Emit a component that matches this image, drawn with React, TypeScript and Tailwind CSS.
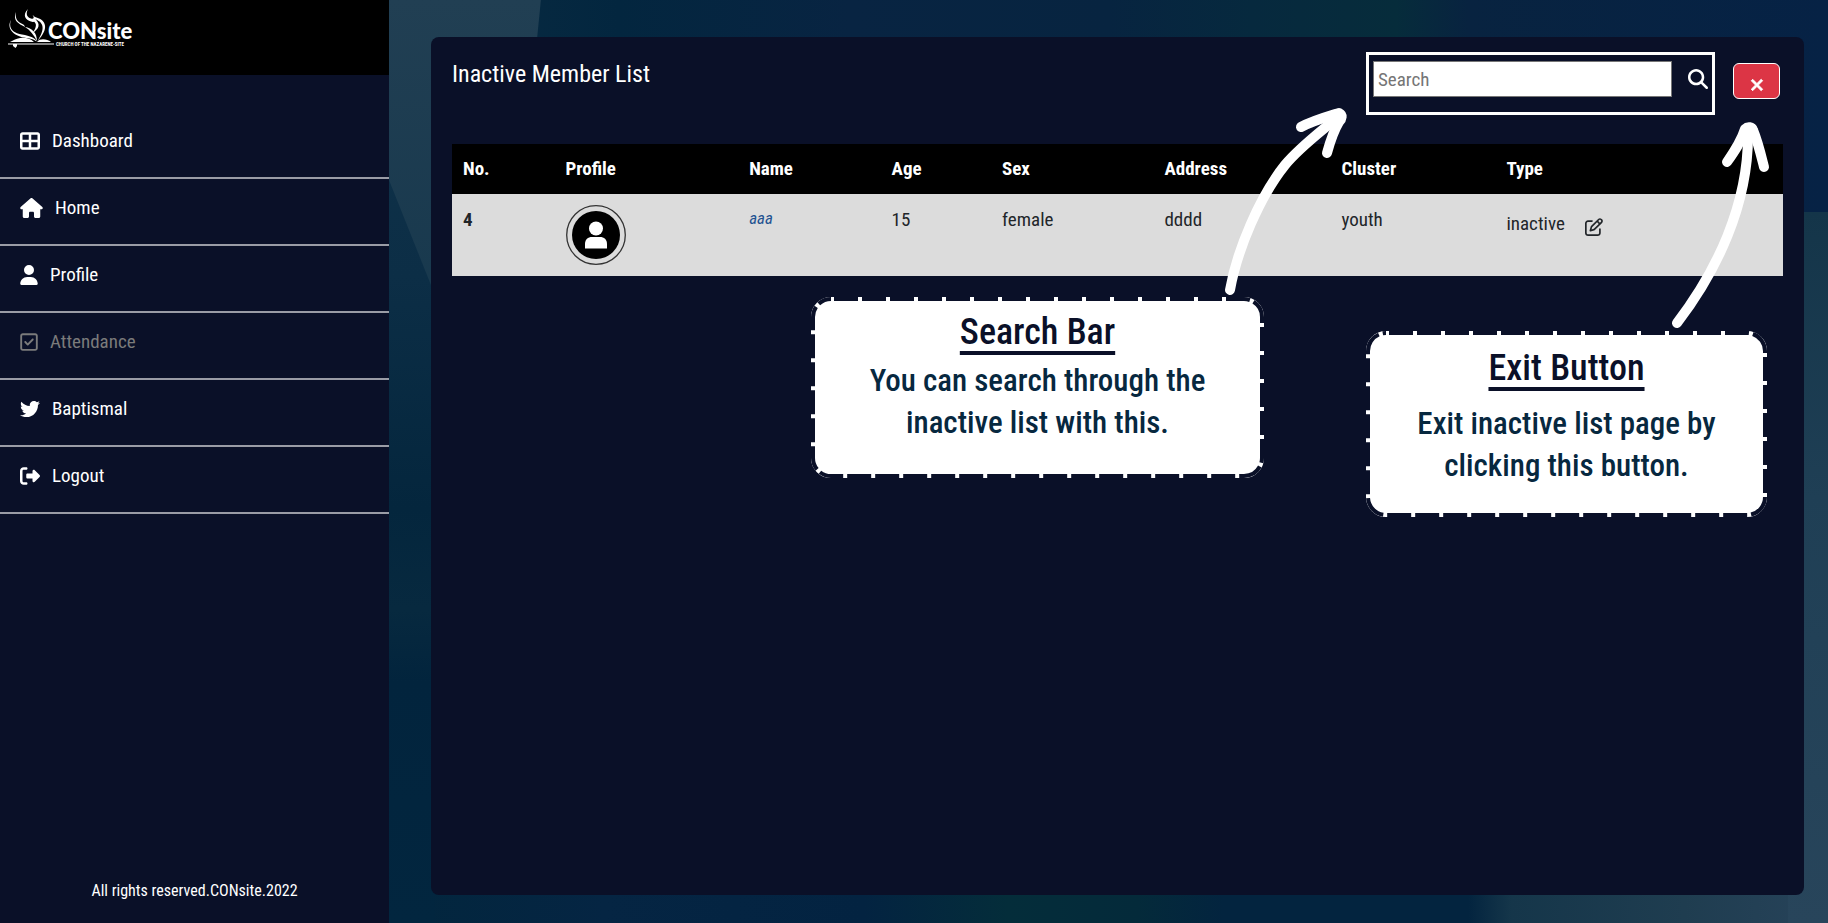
import type { ReactNode } from "react";
import { BiX } from "react-icons/bi";
import {
  FaHouse,
  FaMagnifyingGlass,
  FaRegPenToSquare,
  FaRegSquareCheck,
  FaRightFromBracket,
  FaTableCellsLarge,
  FaTwitter,
  FaUser,
} from "react-icons/fa6";

const navItems = [
  { label: "Dashboard", icon: <FaTableCellsLarge className="h-5 w-5" />, muted: false },
  { label: "Home", icon: <FaHouse className="h-5 w-[23px]" />, muted: false },
  { label: "Profile", icon: <FaUser className="h-5 w-[18px]" />, muted: false },
  { label: "Attendance", icon: <FaRegSquareCheck className="h-5 w-[18px]" />, muted: true },
  { label: "Baptismal", icon: <FaTwitter className="h-5 w-5" />, muted: false },
  { label: "Logout", icon: <FaRightFromBracket className="h-5 w-5" />, muted: false },
];

const columns = [
  { label: "No.", width: "w-[7.7%]" },
  { label: "Profile", width: "w-[13.8%]" },
  { label: "Name", width: "w-[10.7%]" },
  { label: "Age", width: "w-[8.3%]" },
  { label: "Sex", width: "w-[12.2%]" },
  { label: "Address", width: "w-[13.3%]" },
  { label: "Cluster", width: "w-[12.4%]" },
  { label: "Type", width: "" },
];

function Backdrop() {
  return (
    <svg
      className="absolute inset-0 h-full w-full"
      viewBox="0 0 1440 923"
      preserveAspectRatio="none"
      aria-hidden="true"
    >
      <defs>
        <linearGradient id="top" x1="0" x2="1" y1="0" y2="0">
          <stop offset="0" stopColor="#0a2c42" />
          <stop offset="0.16" stopColor="#03263f" />
          <stop offset="0.32" stopColor="#082442" />
          <stop offset="0.5" stopColor="#072440" />
          <stop offset="0.6" stopColor="#06293e" />
          <stop offset="0.7" stopColor="#062c3b" />
          <stop offset="0.75" stopColor="#082340" />
          <stop offset="1" stopColor="#062245" />
        </linearGradient>
        <linearGradient id="bottom" x1="0" x2="1" y1="0" y2="0">
          <stop offset="0" stopColor="#02263d" />
          <stop offset="0.15" stopColor="#052543" />
          <stop offset="0.33" stopColor="#032341" />
          <stop offset="0.43" stopColor="#042d3a" />
          <stop offset="0.52" stopColor="#042a3a" />
          <stop offset="0.58" stopColor="#03243f" />
          <stop offset="0.75" stopColor="#03243f" />
          <stop offset="0.78" stopColor="#15364a" />
          <stop offset="0.9" stopColor="#1f3d50" />
          <stop offset="1" stopColor="#27435a" />
        </linearGradient>
        <linearGradient id="leftEdge" x1="0" x2="0" y1="0" y2="1">
          <stop offset="0" stopColor="#10334a" />
          <stop offset="0.3" stopColor="#0c2e46" />
          <stop offset="0.55" stopColor="#04263d" />
          <stop offset="0.66" stopColor="#07293f" />
          <stop offset="0.74" stopColor="#02243d" />
          <stop offset="1" stopColor="#02263f" />
        </linearGradient>
        <linearGradient id="leftLight" x1="0" x2="0" y1="0" y2="1">
          <stop offset="0" stopColor="#213f53" />
          <stop offset="1" stopColor="#17384d" />
        </linearGradient>
        <linearGradient id="rightEdge" x1="0" x2="0" y1="0" y2="1">
          <stop offset="0" stopColor="#143549" />
          <stop offset="0.4" stopColor="#1f3f55" />
          <stop offset="1" stopColor="#28455b" />
        </linearGradient>
      </defs>
      <rect width="1440" height="480" fill="url(#top)" />
      <rect y="480" width="1440" height="443" fill="url(#bottom)" />
      <rect width="46" height="923" fill="url(#leftEdge)" />
      <path d="M0 0H152L146 60L60 330L0 180Z" fill="url(#leftLight)" />
      <rect x="1400" y="212" width="40" height="711" fill="url(#rightEdge)" />
    </svg>
  );
}

function Logo() {
  return (
    <a href="#home" aria-label="CONsite home" className="flex items-start text-white">
      <svg viewBox="0 0 46 40" className="h-10 w-[46px] shrink-0" fill="currentColor" aria-hidden="true">
        <path d="M3 12C0 20 5 25 14 26.500C22 28 28 30 28.500 33.500C24 29.500 17 30.500 12 28.500C3 25.500 -1 19 3 12Z" />
        <path d="M8 4C7 10 9 13 12.500 15C15.500 16.500 16.500 17 17 19C13 16.500 4 14 8 4Z" />
        <path d="M20 1C17.500 6 19 9.500 23 10.500C26 11.500 26.500 9 24.500 7C29.500 9.500 28 15.500 23 13.500C17.500 12 14 7 20 1Z" />
        <path d="M27 9C39 12 41 21 29.500 33C36.500 22 37 15 27 11C33 16 31 21 24.500 25C29 19 29 15 25 13Z" />
        <path d="M17 19C24 20 29 25 29 33C26 27 22 22 17 19Z" />
        <path d="M4 33C10 29 20 28 26 34H2Z" />
        <path d="M29 34C32 30 39 31 43 34Z" />
        <path d="M0 35.500H46V36.500H0Z" />
        <path d="M5 36H9V38L7.500 40L5 38Z" />
      </svg>
      <span className="-ml-1.5 flex flex-col pt-3 [font-family:Lato,sans-serif]">
        <span className="text-[22px] leading-[22px] font-black">CONsite</span>
        <span className="ml-2 text-[5px] leading-[4px] font-bold [font-family:'Roboto_Condensed',Roboto,sans-serif]">
          CHURCH OF THE NAZARENE-SITE
        </span>
      </span>
    </a>
  );
}

function Callout({
  title,
  place,
  titleGap,
  children,
}: {
  title: string;
  place: string;
  titleGap: string;
  children: ReactNode;
}) {
  return (
    <aside className={`absolute text-center ${place}`}>
      <svg className="absolute inset-0 h-full w-full" aria-hidden="true">
        <rect
          x="2"
          y="2"
          rx="18"
          className="h-[calc(100%-4px)] w-[calc(100%-4px)] fill-white stroke-white"
          strokeWidth="4"
        />
        <rect
          x="2"
          y="2"
          rx="18"
          className="h-[calc(100%-4px)] w-[calc(100%-4px)] fill-none stroke-[#0a1028]"
          strokeWidth="4"
          strokeDasharray="24 4"
          strokeDashoffset="25"
        />
      </svg>
      <div className="relative">
        <h2
          className={`text-[36px] leading-[50px] font-medium text-[#0a1028] underline decoration-4 underline-offset-[7px] ${titleGap}`}
        >
          {title}
        </h2>
        <p className="text-[31px] leading-[42px] font-medium text-[#07283f]">{children}</p>
      </div>
    </aside>
  );
}

function Arrows() {
  return (
    <svg
      className="pointer-events-none absolute top-0 right-0 h-[300px] w-[600px] text-white"
      viewBox="1204 37 600 300"
      fill="none"
      stroke="currentColor"
      strokeWidth="10"
      strokeLinecap="round"
      strokeLinejoin="round"
      aria-hidden="true"
    >
      <path d="M1230 290C1237 250 1260 196 1285 165C1300 147 1318 134 1338 117" />
      <path d="M1301 127C1312 121 1326 117 1339 113C1343 115 1342 119 1339 122C1333 132 1330 142 1327 153" />
      <path d="M1677 323C1716 272 1749 205 1748 132" />
      <path d="M1727 162C1734 152 1741 142 1745 129C1748 126 1752 127 1753 130C1758 142 1761 155 1764 167" />
    </svg>
  );
}

export default function App() {
  return (
    <div className="flex min-h-screen bg-[#03253d] text-[19px] text-white [font-family:'Roboto_Condensed',Roboto,sans-serif]">
      <aside className="flex w-[389px] shrink-0 flex-col bg-[#0a1028]">
        <div className="h-[75px] bg-black pt-2 pl-2">
          <Logo />
        </div>
        <nav className="mt-[37px]">
          <ul>
            {navItems.map((item) => (
              <li key={item.label} className="border-b-2 border-[#9a9ca6]">
                <a
                  href={`#${item.label.toLowerCase()}`}
                  className={`flex h-[65px] items-start gap-3 pt-[17px] pl-5 ${
                    item.muted ? "text-[#7b7b7b]" : "text-white"
                  }`}
                >
                  <span className="flex h-6 items-center">{item.icon}</span>
                  <span className="leading-6">{item.label}</span>
                </a>
              </li>
            ))}
          </ul>
        </nav>
        <p className="mt-auto pb-5 text-center text-[16px] leading-6">
          All rights reserved.CONsite.2022
        </p>
      </aside>

      <main className="relative flex min-w-0 flex-1 flex-col pt-[37px] pr-6 pb-7 pl-[42px]">
        <Backdrop />
        <section className="relative flex flex-1 flex-col rounded-lg bg-[#0a1028] px-[21px] pt-[15px]">
          <header className="flex items-start justify-between">
            <h1 className="pt-1.5 text-[24px] leading-8">Inactive Member List</h1>
            <div className="flex items-start gap-[18px] pr-[3px]">
              <form
                role="search"
                className="flex h-[63px] w-[349px] items-start border-[3px] border-white px-1 pt-1.5"
              >
                <input
                  type="search"
                  aria-label="Search"
                  placeholder="Search"
                  className="h-9 min-w-0 flex-1 border border-[#767676] bg-white px-1 text-[19px] text-[#222222] placeholder:text-[#757575]"
                />
                <button type="submit" aria-label="Submit search" className="mt-2 ml-4">
                  <FaMagnifyingGlass className="h-5 w-5" />
                </button>
              </form>
              <button
                type="button"
                aria-label="Exit"
                className="mt-[11px] flex h-9 w-[47px] items-center justify-center rounded-md border border-white bg-[#dc3545] pt-2"
              >
                <BiX className="h-6 w-6" stroke="currentColor" strokeWidth="1" />
              </button>
            </div>
          </header>

          <table className="mt-[29px] w-full table-fixed border-collapse text-left">
            <thead className="bg-black">
              <tr className="h-[50px]">
                {columns.map((column) => (
                  <th key={column.label} scope="col" className={`px-[11px] font-bold ${column.width}`}>
                    {column.label}
                  </th>
                ))}
              </tr>
            </thead>
            <tbody className="bg-[#dcdcdc] text-[#212529]">
              <tr className="h-[82px] align-top leading-6">
                <th scope="row" className="px-[11px] pt-3.5 font-bold">4</th>
                <td className="px-3 pt-[11px]">
                  <svg viewBox="0 0 60 60" className="h-[60px] w-[60px]" role="img" aria-label="Member photo">
                    <circle cx="30" cy="30" r="29.3" fill="none" stroke="#333333" strokeWidth="1.3" />
                    <circle cx="30" cy="30" r="24" fill="#000000" />
                    <circle cx="30" cy="23.5" r="7" fill="#ffffff" />
                    <path d="M19 43.5V39C19 34.5 22 32 26 32H34C38 32 41 34.5 41 39V43.5Z" fill="#ffffff" />
                  </svg>
                </td>
                <td className="px-[11px] pt-3">
                  <a href="#member" className="text-[17px] text-[#1f5291] italic">aaa</a>
                </td>
                <td className="px-[11px] pt-3.5">15</td>
                <td className="px-[11px] pt-3.5">female</td>
                <td className="px-[11px] pt-3.5">dddd</td>
                <td className="px-[11px] pt-3.5">youth</td>
                <td className="px-[11px] pt-[18px]">
                  <span className="flex gap-5">
                    inactive
                    <button type="button" aria-label="Edit member" className="pt-1.5">
                      <FaRegPenToSquare className="h-[18px] w-[18px]" />
                    </button>
                  </span>
                </td>
              </tr>
            </tbody>
          </table>

          <Arrows />
          <Callout
            title="Search Bar"
            place="top-[260px] right-[540px] h-[181px] w-[453px] px-12 pt-2.5"
            titleGap="mb-[3px]"
          >
            You can search through the inactive list with this.
          </Callout>
          <Callout
            title="Exit Button"
            place="top-[294px] right-[37px] h-[186px] w-[401px] px-10 pt-3"
            titleGap="mb-2.5"
          >
            Exit inactive list page by clicking this button.
          </Callout>
        </section>
      </main>
    </div>
  );
}
